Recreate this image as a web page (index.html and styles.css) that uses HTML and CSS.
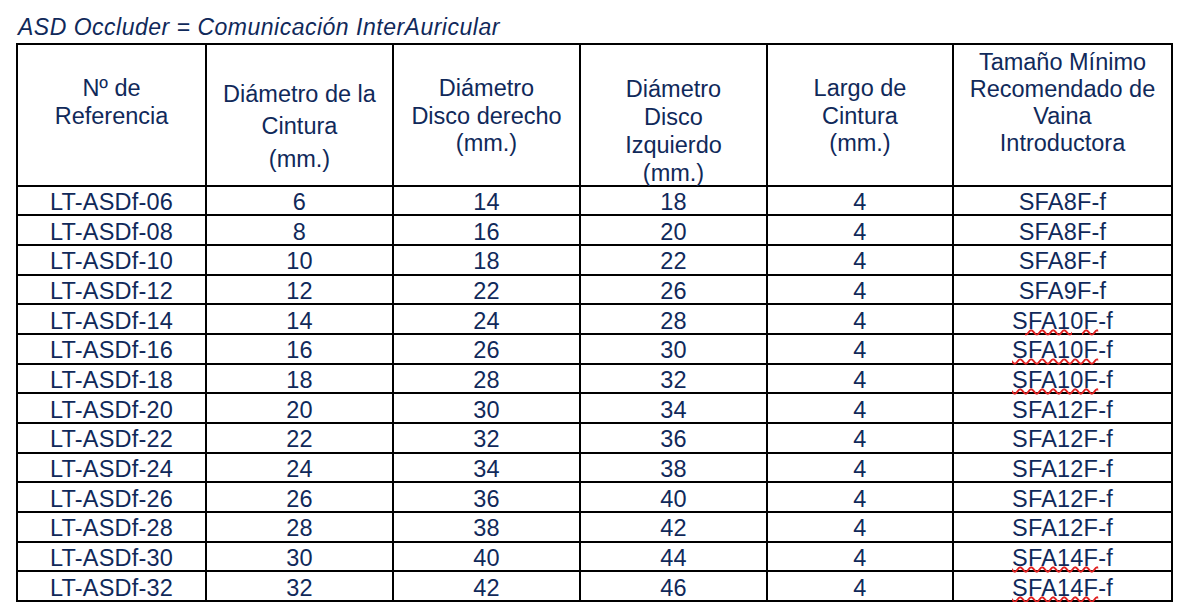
FILE: index.html
```html
<!DOCTYPE html>
<html lang="es">
<head>
<meta charset="utf-8">
<title>ASD Occluder</title>
<link rel="stylesheet" href="styles.css">
</head>
<body>
<div class="page">
  <div class="title">ASD Occluder = Comunicación InterAuricular</div>
  <table class="spec">
    <colgroup>
      <col class="w1"><col class="w2"><col class="w3"><col class="w4"><col class="w5"><col class="w6">
    </colgroup>
    <thead>
      <tr class="head">
        <th><div class="hd h1">Nº de<br>Referencia</div></th>
        <th><div class="hd h2">Diámetro de la<br>Cintura<br>(mm.)</div></th>
        <th><div class="hd h3">Diámetro<br>Disco derecho<br>(mm.)</div></th>
        <th><div class="hd h4">Diámetro<br>Disco<br>Izquierdo<br>(mm.)</div></th>
        <th><div class="hd h5">Largo de<br>Cintura<br>(mm.)</div></th>
        <th><div class="hd h6">Tamaño Mínimo<br>Recomendado de<br>Vaina<br>Introductora</div></th>
      </tr>
    </thead>
    <tbody>
      <tr><td>LT-ASDf-06</td><td>6</td><td>14</td><td>18</td><td>4</td><td>SFA8F-f</td></tr>
      <tr><td>LT-ASDf-08</td><td>8</td><td>16</td><td>20</td><td>4</td><td>SFA8F-f</td></tr>
      <tr><td>LT-ASDf-10</td><td>10</td><td>18</td><td>22</td><td>4</td><td>SFA8F-f</td></tr>
      <tr><td>LT-ASDf-12</td><td>12</td><td>22</td><td>26</td><td>4</td><td>SFA9F-f</td></tr>
      <tr><td>LT-ASDf-14</td><td>14</td><td>24</td><td>28</td><td>4</td><td><span class="sp">SFA10F</span>-f</td></tr>
      <tr><td>LT-ASDf-16</td><td>16</td><td>26</td><td>30</td><td>4</td><td><span class="sp">SFA10F</span>-f</td></tr>
      <tr><td>LT-ASDf-18</td><td>18</td><td>28</td><td>32</td><td>4</td><td><span class="sp">SFA10F</span>-f</td></tr>
      <tr><td>LT-ASDf-20</td><td>20</td><td>30</td><td>34</td><td>4</td><td>SFA12F-f</td></tr>
      <tr><td>LT-ASDf-22</td><td>22</td><td>32</td><td>36</td><td>4</td><td>SFA12F-f</td></tr>
      <tr><td>LT-ASDf-24</td><td>24</td><td>34</td><td>38</td><td>4</td><td>SFA12F-f</td></tr>
      <tr><td>LT-ASDf-26</td><td>26</td><td>36</td><td>40</td><td>4</td><td>SFA12F-f</td></tr>
      <tr><td>LT-ASDf-28</td><td>28</td><td>38</td><td>42</td><td>4</td><td>SFA12F-f</td></tr>
      <tr><td>LT-ASDf-30</td><td>30</td><td>40</td><td>44</td><td>4</td><td><span class="sp">SFA14F</span>-f</td></tr>
      <tr><td>LT-ASDf-32</td><td>32</td><td>42</td><td>46</td><td>4</td><td><span class="sp">SFA14F</span>-f</td></tr>
    </tbody>
  </table>
</div>
</body>
</html>
```

FILE: styles.css
```css
html, body {
  margin: 0;
  padding: 0;
  background: #ffffff;
}

.page {
  padding: 14px 0 0 16px;
  font-family: "Liberation Sans", Arial, Helvetica, sans-serif;
  color: #10295a;
}

.title {
  font-style: italic;
  font-size: 23px;
  line-height: 26px;
  height: 26px;
  margin-left: 2px;
  letter-spacing: 0.5px;
  white-space: nowrap;
}

.spec {
  margin-top: 3px;
  border-collapse: collapse;
  table-layout: fixed;
  width: 1155px;
  border: 2px solid #000;
  font-size: 23.5px;
}

.w1 { width: 189px; }
.w2 { width: 187px; }
.w3 { width: 187px; }
.w4 { width: 187px; }
.w5 { width: 186px; }
.w6 { width: 219px; }

.spec th,
.spec td {
  border: 2px solid #000;
  padding: 0;
  text-align: center;
  font-weight: normal;
  white-space: nowrap;
  overflow: visible;
}

.head {
  height: 141.5px;
}

.spec th {
  vertical-align: top;
}

.hd {
  box-sizing: border-box;
  height: 138px;
  overflow: visible;
  font-size: 23.5px;
  line-height: 27.5px;
  padding-top: 30px;
}

.h2 {
  line-height: 32.5px;
  padding-top: 32.5px;
}

.h4 {
  line-height: 28px;
}

.h6 {
  line-height: 27px;
  padding-top: 4px;
}

.spec tbody tr {
  height: 29.7px;
}

.spec td {
  line-height: 24px;
  padding-top: 3px;
  vertical-align: middle;
  letter-spacing: 0.2px;
}

.sp {
  text-decoration: underline wavy #e02020;
  text-decoration-thickness: 1.5px;
  text-underline-offset: 0px;
}
```
